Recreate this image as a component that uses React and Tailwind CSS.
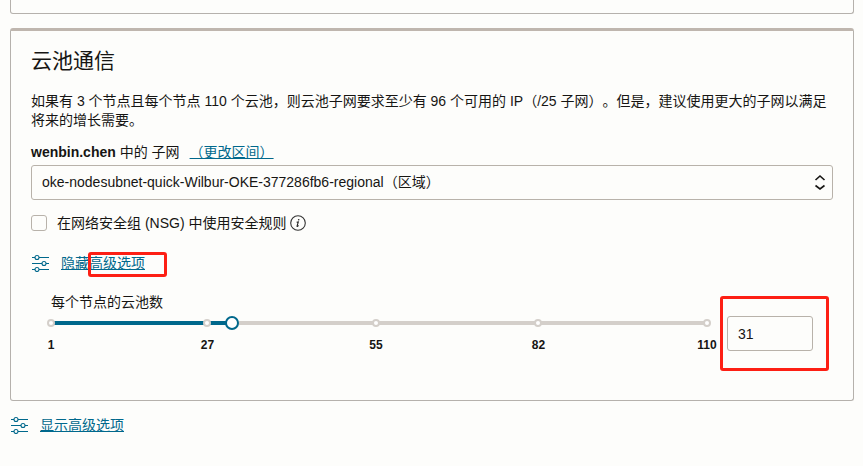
import { useState } from 'react';

const MIN = 1;
const MAX = 110;
const STOPS = [1, 27, 55, 82, 110];
const percent = (n) => `${((n - MIN) / (MAX - MIN)) * 100}%`;

function OptionsIcon() {
  return (
    <svg
      aria-hidden="true"
      viewBox="0 0 18 18"
      className="size-[18px] shrink-0"
      fill="none"
      stroke="#00688c"
      strokeWidth="1.1"
    >
      <path d="M1 3.500h3M8 3.500H18M1 9.500h10M15 9.500H18M1 15.500h3M8 15.500H18" />
      <circle cx="6" cy="3.500" r="2" />
      <circle cx="13" cy="9.500" r="2" />
      <circle cx="6" cy="15.500" r="2" />
    </svg>
  );
}

function InfoIcon() {
  return (
    <svg aria-hidden="true" viewBox="0 0 16 16" className="size-4" fill="none">
      <circle cx="8" cy="8" r="7.3" stroke="#333" strokeWidth="1.1" />
      <circle cx="8.7" cy="4.8" r="0.8" fill="#222" />
      <path
        d="M6.600 7.300l1.700-.4-1.200 4c-.2.9.5.8 1.500-.4"
        stroke="#222"
        strokeWidth="1.1"
      />
    </svg>
  );
}

function AdvancedLink({ children }) {
  return (
    <div className="flex h-5 items-center gap-3">
      <OptionsIcon />
      <a href="#advanced" className="text-[#00688c] underline">
        {children}
      </a>
    </div>
  );
}

function PodSlider({ value, onChange }) {
  return (
    <div className="min-w-0 flex-1">
      <label htmlFor="pods" className="block h-5">
        每个节点的云池数
      </label>
      <div className="relative flex h-5 items-center">
        <div className="h-1 flex-1 bg-[#d4cfca]">
          <div className="h-1 bg-[#00688c]" style={{ width: percent(value) }} />
        </div>
        {STOPS.map((n) => (
          <span
            key={n}
            className="absolute top-1.5 size-2 -translate-x-1/2 rounded-full border-2 border-[#d4cfca] bg-white"
            style={{ left: percent(n) }}
          />
        ))}
        <input
          id="pods"
          type="range"
          min={MIN}
          max={MAX}
          value={value}
          onChange={(e) => onChange(Number(e.target.value))}
          className="absolute inset-y-0 -left-[7px] m-0 w-[calc(100%+14px)] appearance-none bg-transparent [&::-webkit-slider-thumb]:size-3.5 [&::-webkit-slider-thumb]:appearance-none [&::-webkit-slider-thumb]:rounded-full [&::-webkit-slider-thumb]:border-2 [&::-webkit-slider-thumb]:border-[#00688c] [&::-webkit-slider-thumb]:bg-white"
        />
      </div>
      <div className="relative mt-1 h-4 text-xs font-bold">
        {STOPS.map((n) => (
          <span
            key={n}
            className="absolute top-0 -translate-x-1/2"
            style={{ left: percent(n) }}
          >
            {n}
          </span>
        ))}
      </div>
    </div>
  );
}

export default function App() {
  const [pods, setPods] = useState(31);

  return (
    <main className="min-h-screen bg-[#fdfdfb] pr-[9px] pl-2.5 font-['Liberation_Sans','Noto_Sans_CJK_SC',sans-serif] text-sm leading-[19px] text-[#161513] [text-spacing-trim:space-all]">
      <div className="h-3.5 rounded-b-[3px] border border-t-0 border-[#b5b1ac]" />

      <section className="mt-3.5 rounded-[3px] border border-t-[3px] border-[#b5b1ac] border-t-[#bfb6ae] px-5 pb-[47px]">
        <h2 className="pt-4 text-[21px] leading-7 font-normal">云池通信</h2>
        <p className="mt-[17px]">
          如果有 3 个节点且每个节点 110 个云池，则云池子网要求至少有 96 个可用的
          IP（/25 子网）。但是，建议使用更大的子网以满足将来的增长需要。
        </p>

        <div className="mt-3 flex h-5 items-center gap-2.5">
          <label htmlFor="subnet">
            <b>wenbin.chen</b> 中的 子网
          </label>
          <a href="#compartment" className="text-[#00688c] underline">
            （更改区间）
          </a>
        </div>
        <div className="relative mt-[3px]">
          <select
            id="subnet"
            className="block h-[35px] w-full appearance-none rounded-[3px] border border-[#b8b2aa] bg-transparent px-2.5"
          >
            <option>
              oke-nodesubnet-quick-Wilbur-OKE-377286fb6-regional（区域）
            </option>
          </select>
          <svg
            aria-hidden="true"
            viewBox="0 0 12 16"
            className="pointer-events-none absolute top-[9px] right-[7px] h-4 w-3"
            fill="none"
            stroke="#161513"
            strokeWidth="1.6"
          >
            <path d="M1.500 6L6 2l4.500 4M1.500 11.500L6 15l4.500-3.500" />
          </svg>
        </div>

        <div className="mt-[13px] flex h-5 items-center">
          <input
            id="nsg"
            type="checkbox"
            className="size-4 appearance-none rounded-[3px] border border-[#b8b2aa] checked:bg-[#00688c]"
          />
          <label htmlFor="nsg" className="ml-2.5">
            在网络安全组 (NSG) 中使用安全规则
          </label>
          <button type="button" aria-label="信息" className="ml-1">
            <InfoIcon />
          </button>
        </div>

        <div className="relative mt-5">
          <AdvancedLink>隐藏高级选项</AdvancedLink>
          <div className="pointer-events-none absolute -top-px left-[57px] h-[25px] w-[79px] rounded-[3px] border-3 border-[#fd1f14]" />
        </div>

        <div className="mt-5 flex gap-5 px-5">
          <PodSlider value={pods} onChange={setPods} />
          <div className="relative mt-[23px]">
            <input
              type="text"
              aria-label="每个节点的云池数"
              value={pods}
              onChange={(e) => setPods(Number(e.target.value) || MIN)}
              className="block h-[35px] w-[86px] rounded-[3px] border border-[#b8b2aa] bg-transparent px-2.5"
            />
            <div className="pointer-events-none absolute -top-5 -left-[7px] h-[75px] w-[109px] rounded-[3px] border-3 border-[#fd1f14]" />
          </div>
        </div>
      </section>

      <div className="mt-3.5">
        <AdvancedLink>显示高级选项</AdvancedLink>
      </div>
    </main>
  );
}
